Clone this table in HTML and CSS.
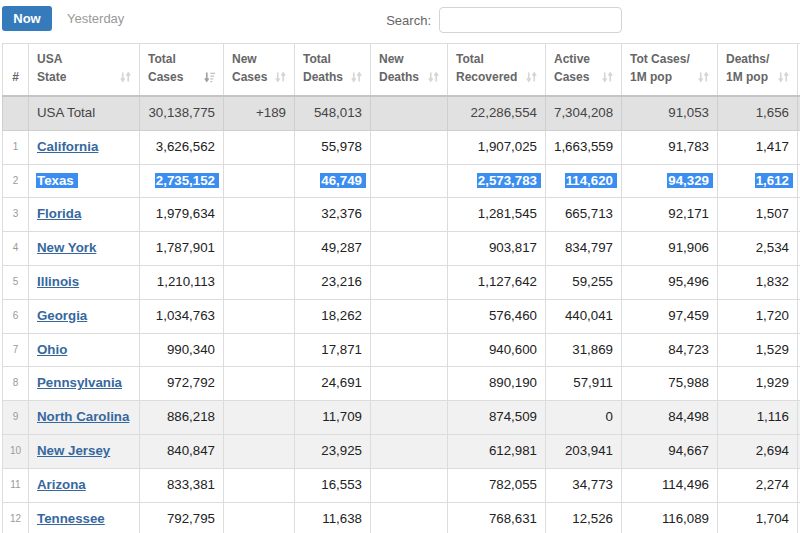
FILE: index.html
```html
<!DOCTYPE html>
<html>
<head>
<meta charset="utf-8">
<link rel="stylesheet" href="styles.css">
</head>
<body>
<div class="page">
  <div class="topbar">
    <div class="tabs">
      <span class="tab tab-active">Now</span>
      <span class="tab">Yesterday</span>
    </div>
    <label class="search">Search: <span class="search-input"></span></label>
  </div>
  <table class="grid">
    <colgroup>
      <col class="c-idx"><col class="c-state"><col class="c-tc"><col class="c-nc"><col class="c-td"><col class="c-nd"><col class="c-tr"><col class="c-ac"><col class="c-tcp"><col class="c-dp"><col class="c-tt">
    </colgroup>
    <thead>
      <tr>
        <th class="idx">#</th>
        <th><div class="hd"><span>USA<br>State</span><svg class="sort" viewBox="0 0 12 12"><path d="M3 1v9M1 7.5l2 3 2-3M9 11V2M7 4.5l2-3 2 3"/></svg></div></th>
        <th><div class="hd"><span>Total<br>Cases</span><svg class="sort active" viewBox="0 0 12 12"><path class="dark" d="M3 1v9M1 7.5l2 3 2-3"/><path class="bars" d="M7 2h5M7 5h4M7 8h3M7 11h2"/></svg></div></th>
        <th><div class="hd"><span>New<br>Cases</span><svg class="sort" viewBox="0 0 12 12"><path d="M3 1v9M1 7.5l2 3 2-3M9 11V2M7 4.5l2-3 2 3"/></svg></div></th>
        <th><div class="hd"><span>Total<br>Deaths</span><svg class="sort" viewBox="0 0 12 12"><path d="M3 1v9M1 7.5l2 3 2-3M9 11V2M7 4.5l2-3 2 3"/></svg></div></th>
        <th><div class="hd"><span>New<br>Deaths</span><svg class="sort" viewBox="0 0 12 12"><path d="M3 1v9M1 7.5l2 3 2-3M9 11V2M7 4.5l2-3 2 3"/></svg></div></th>
        <th><div class="hd"><span>Total<br>Recovered</span><svg class="sort" viewBox="0 0 12 12"><path d="M3 1v9M1 7.5l2 3 2-3M9 11V2M7 4.5l2-3 2 3"/></svg></div></th>
        <th><div class="hd"><span>Active<br>Cases</span><svg class="sort" viewBox="0 0 12 12"><path d="M3 1v9M1 7.5l2 3 2-3M9 11V2M7 4.5l2-3 2 3"/></svg></div></th>
        <th><div class="hd"><span>Tot Cases/<br>1M pop</span><svg class="sort" viewBox="0 0 12 12"><path d="M3 1v9M1 7.5l2 3 2-3M9 11V2M7 4.5l2-3 2 3"/></svg></div></th>
        <th><div class="hd"><span>Deaths/<br>1M pop</span><svg class="sort" viewBox="0 0 12 12"><path d="M3 1v9M1 7.5l2 3 2-3M9 11V2M7 4.5l2-3 2 3"/></svg></div></th>
        <th></th>
      </tr>
    </thead>
    <tbody>
      <tr class="total">
        <td class="idx"></td><td class="l">USA Total</td><td>30,138,775</td><td>+189</td><td>548,013</td><td></td><td>22,286,554</td><td>7,304,208</td><td>91,053</td><td>1,656</td><td></td>
      </tr>
      <tr><td class="idx">1</td><td class="l"><a class="st">California</a></td><td>3,626,562</td><td></td><td>55,978</td><td></td><td>1,907,025</td><td>1,663,559</td><td>91,783</td><td>1,417</td><td></td></tr>
      <tr class="sel"><td class="idx">2</td><td class="l"><span class="hl">Texas</span></td><td><span class="hl">2,735,152</span></td><td></td><td><span class="hl">46,749</span></td><td></td><td><span class="hl">2,573,783</span></td><td><span class="hl">114,620</span></td><td><span class="hl">94,329</span></td><td><span class="hl">1,612</span></td><td></td></tr>
      <tr><td class="idx">3</td><td class="l"><a class="st">Florida</a></td><td>1,979,634</td><td></td><td>32,376</td><td></td><td>1,281,545</td><td>665,713</td><td>92,171</td><td>1,507</td><td></td></tr>
      <tr><td class="idx">4</td><td class="l"><a class="st">New York</a></td><td>1,787,901</td><td></td><td>49,287</td><td></td><td>903,817</td><td>834,797</td><td>91,906</td><td>2,534</td><td></td></tr>
      <tr><td class="idx">5</td><td class="l"><a class="st">Illinois</a></td><td>1,210,113</td><td></td><td>23,216</td><td></td><td>1,127,642</td><td>59,255</td><td>95,496</td><td>1,832</td><td></td></tr>
      <tr><td class="idx">6</td><td class="l"><a class="st">Georgia</a></td><td>1,034,763</td><td></td><td>18,262</td><td></td><td>576,460</td><td>440,041</td><td>97,459</td><td>1,720</td><td></td></tr>
      <tr><td class="idx">7</td><td class="l"><a class="st">Ohio</a></td><td>990,340</td><td></td><td>17,871</td><td></td><td>940,600</td><td>31,869</td><td>84,723</td><td>1,529</td><td></td></tr>
      <tr><td class="idx">8</td><td class="l"><a class="st">Pennsylvania</a></td><td>972,792</td><td></td><td>24,691</td><td></td><td>890,190</td><td>57,911</td><td>75,988</td><td>1,929</td><td></td></tr>
      <tr class="shade"><td class="idx">9</td><td class="l"><a class="st">North Carolina</a></td><td>886,218</td><td></td><td>11,709</td><td></td><td>874,509</td><td>0</td><td>84,498</td><td>1,116</td><td></td></tr>
      <tr class="shade"><td class="idx">10</td><td class="l"><a class="st">New Jersey</a></td><td>840,847</td><td></td><td>23,925</td><td></td><td>612,981</td><td>203,941</td><td>94,667</td><td>2,694</td><td></td></tr>
      <tr><td class="idx">11</td><td class="l"><a class="st">Arizona</a></td><td>833,381</td><td></td><td>16,553</td><td></td><td>782,055</td><td>34,773</td><td>114,496</td><td>2,274</td><td></td></tr>
      <tr><td class="idx">12</td><td class="l"><a class="st">Tennessee</a></td><td>792,795</td><td></td><td>11,638</td><td></td><td>768,631</td><td>12,526</td><td>116,089</td><td>1,704</td><td></td></tr>
    </tbody>
  </table>
</div>
</body>
</html>
```
FILE: styles.css
```css
html, body {
  margin: 0;
  padding: 0;
  overflow: hidden;
  background: #fff;
}
body {
  font-family: "Liberation Sans", Arial, sans-serif;
  color: #222;
}
.page {
  width: 900px;
  padding: 6px 0 0 2px;
}
.topbar {
  width: 620px;
  display: flex;
  justify-content: space-between;
  align-items: flex-start;
  height: 27px;
  margin-bottom: 10px;
}
.tabs {
  display: flex;
  align-items: center;
  gap: 15px;
}
.tab {
  font-size: 13px;
  color: #999;
  line-height: 25px;
}
.tab-active {
  background: #357abb;
  color: #fff;
  font-weight: bold;
  border-radius: 3px;
  width: 50px;
  text-align: center;
}
.search {
  display: flex;
  align-items: center;
  gap: 8px;
  font-size: 13px;
  color: #666;
  line-height: 27px;
  margin-top: 0.5px;
}
.search-input {
  display: block;
  width: 181px;
  height: 24px;
  border: 1px solid #d4d4d4;
  border-radius: 4px;
}
.grid {
  border-collapse: collapse;
  table-layout: fixed;
  width: 895px;
  font-size: 13.3px;
}
.c-idx { width: 26px; }
.c-state { width: 111px; }
.c-tc { width: 84px; }
.c-nc { width: 71px; }
.c-td { width: 76px; }
.c-nd { width: 77px; }
.c-tr { width: 98px; }
.c-ac { width: 76px; }
.c-tcp { width: 96px; }
.c-dp { width: 80px; }
.c-tt { width: 100px; }
.grid th, .grid td {
  border: 1px solid #dcdcdc;
  white-space: nowrap;
  overflow: hidden;
}
.grid th {
  border-bottom: 2px solid #c4c4c4;
  padding: 7px 8px 9px 8px;
  font-size: 12px;
  font-weight: bold;
  color: #666;
  text-align: left;
  line-height: 17.5px;
  vertical-align: bottom;
}
.grid th.idx {
  text-align: center;
  padding: 0 0 9px 0;
  vertical-align: bottom;
  line-height: 17px;
}
.hd {
  display: flex;
  justify-content: space-between;
  align-items: flex-end;
}
.sort {
  width: 11px;
  height: 12px;
  margin-bottom: 3px;
  flex: none;
  fill: none;
  stroke: #d6d6d6;
  stroke-width: 1.8;
}
.sort.active .dark { stroke: #a0a0a0; }
.sort.active .bars { stroke: #c0c0c0; stroke-width: 1.5; }
.grid td {
  padding: 7px 8px;
  line-height: 18.8px;
  text-align: right;
  color: #222;
}
.grid td.l { text-align: left; }
.grid td.idx {
  text-align: center;
  padding: 7px 0;
  font-size: 10px;
  font-weight: normal;
  color: #9a9a9a;
}
.total td {
  background: #e1e1e1;
  color: #444;
  border-color: #cfcfcf;
}
.shade td { background: #f1f1f1; }
.st {
  color: #36689e;
  font-weight: bold;
  text-decoration: underline;
  text-underline-offset: 1px;
}
.sel td { font-weight: bold; }
.hl {
  background: #3b8ef0;
  color: #fff;
  padding: 0 4px 0 1px;
  margin: 0 -4px 0 -1px;
}
```
